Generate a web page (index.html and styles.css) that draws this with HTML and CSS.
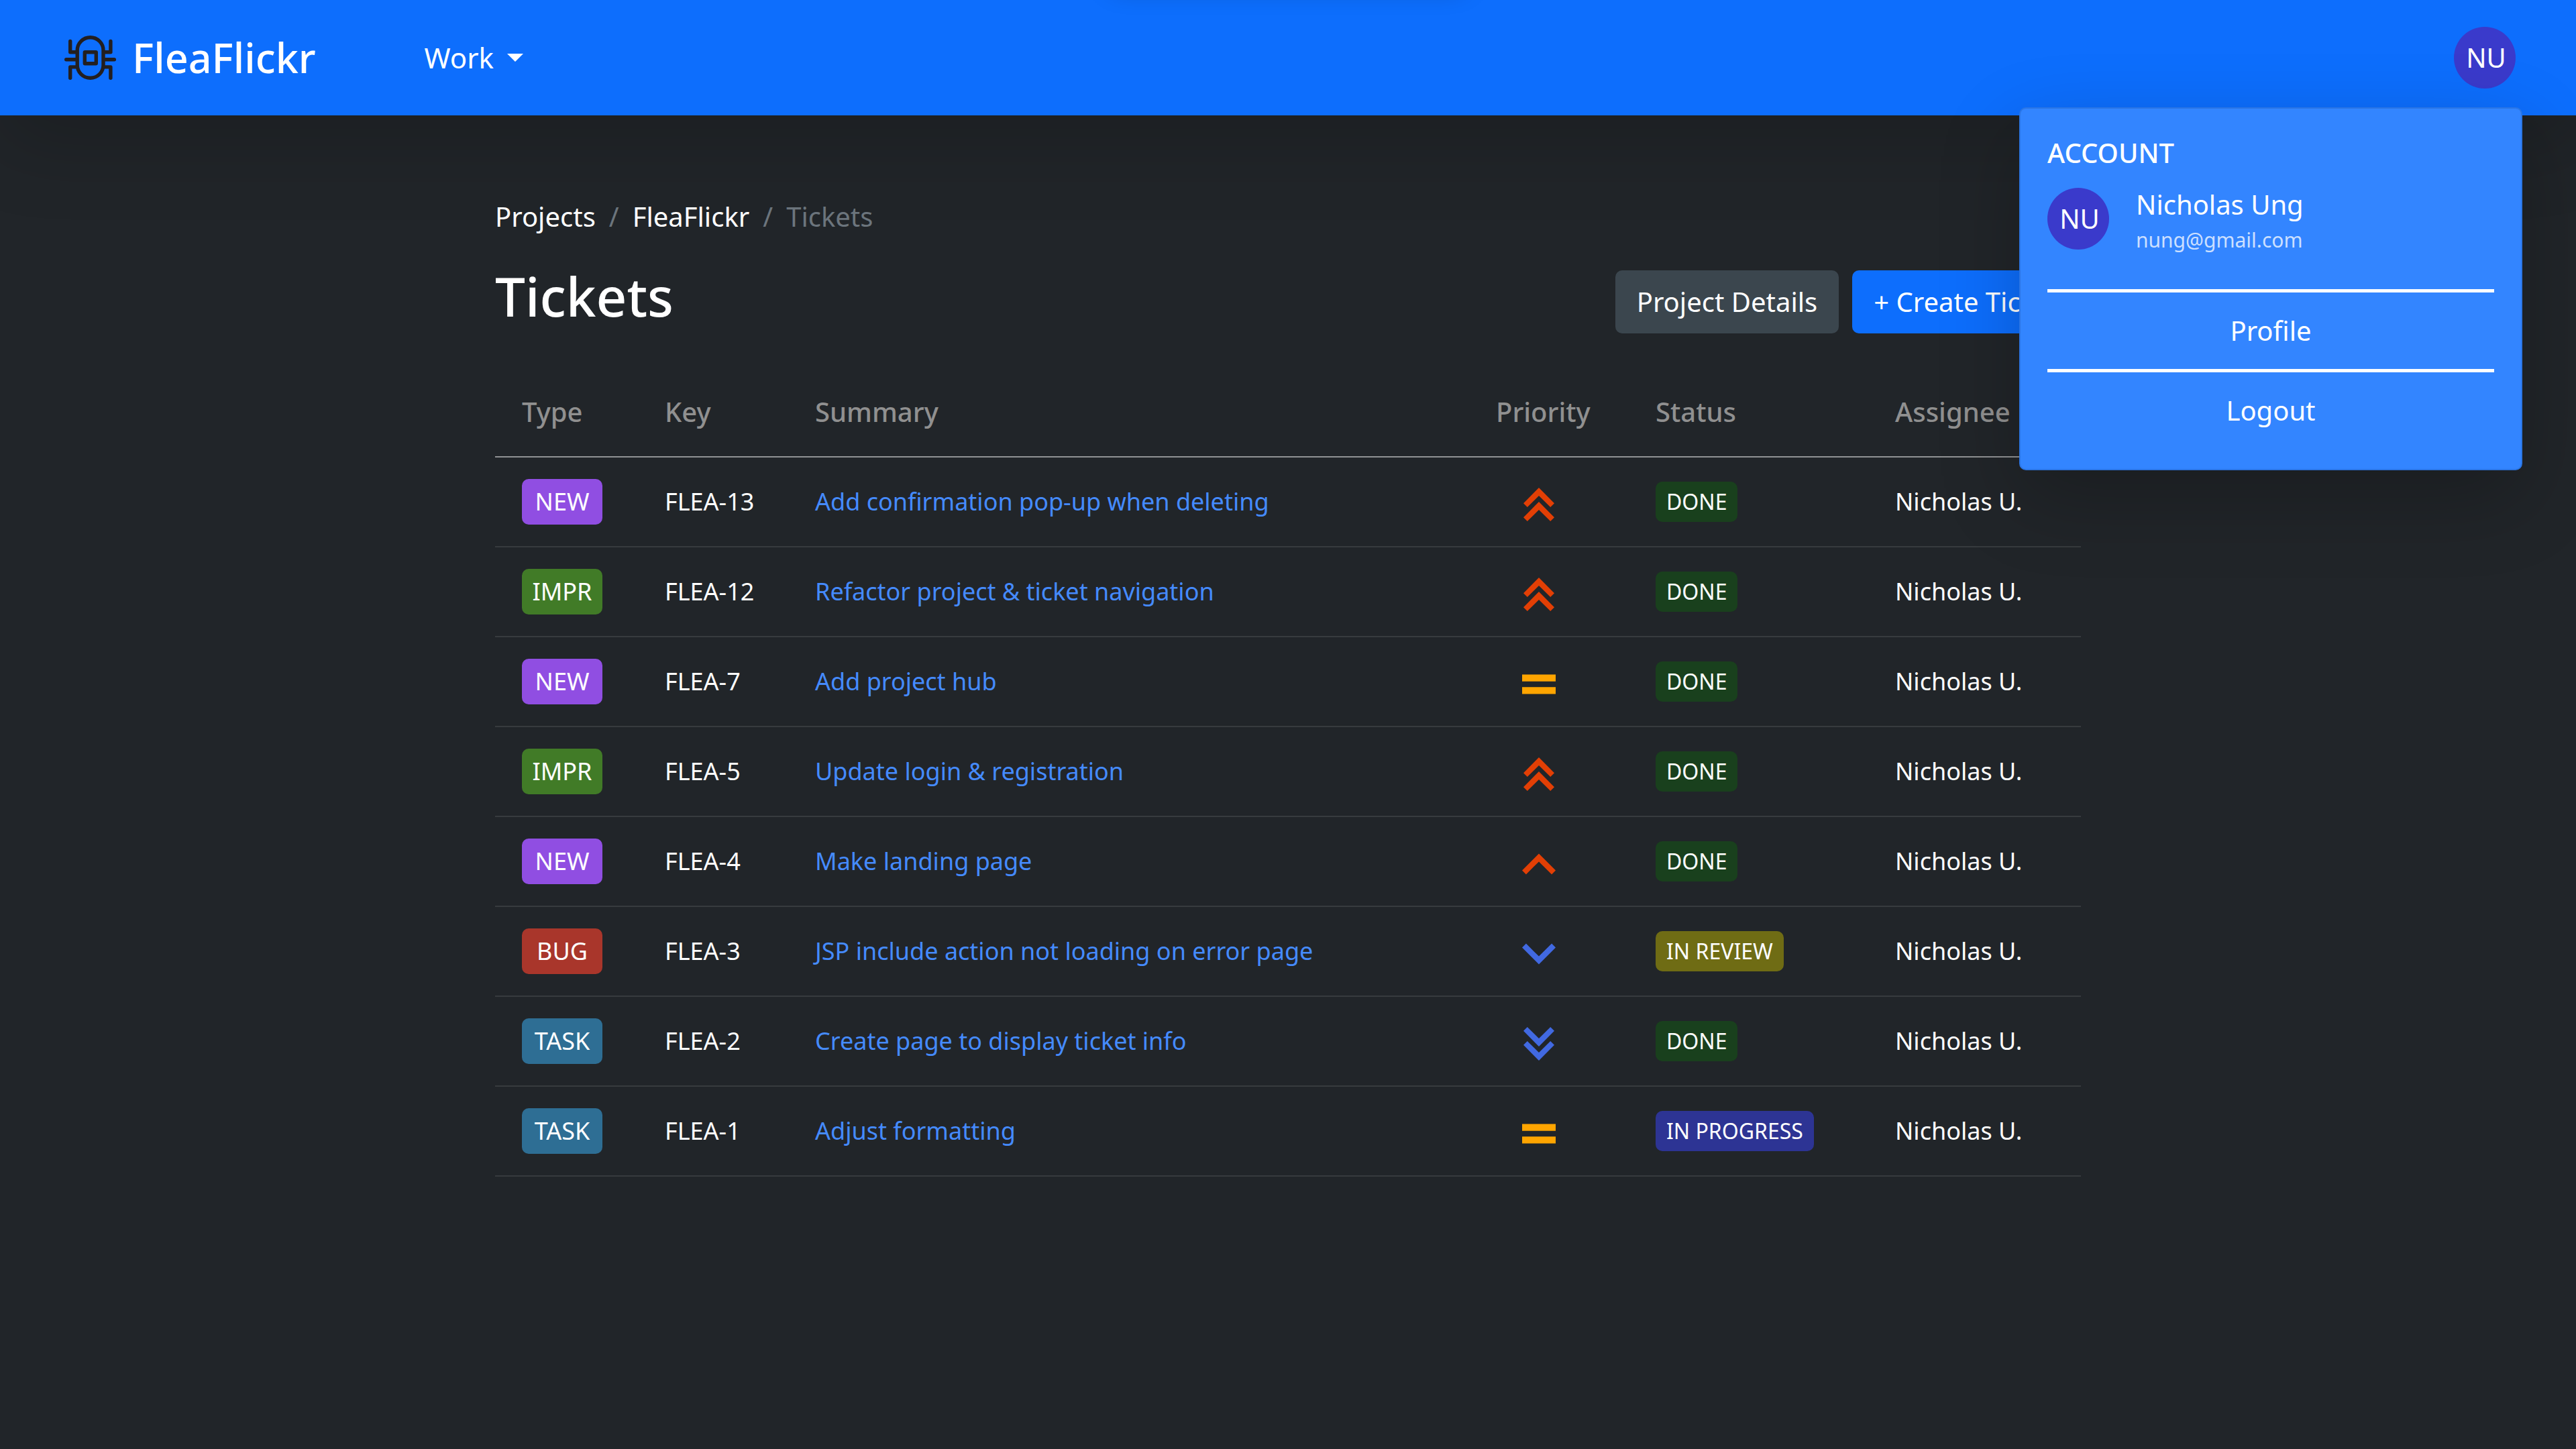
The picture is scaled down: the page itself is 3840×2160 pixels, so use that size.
FILE: index.html
```html
<!DOCTYPE html>
<html lang="en">
<head>
<meta charset="utf-8">
<meta name="viewport" content="width=device-width, initial-scale=1">
<title>Tickets - FleaFlickr</title>
<link rel="stylesheet" href="styles.css">
</head>
<body>
<svg class="sprite" width="0" height="0" aria-hidden="true">
  <symbol id="highest" viewBox="0 0 50 50"><path fill="#e23f05" d="M25 0 48 23.3 42.2 29 25 12 7.8 29 2 23.3zM25 21 48 44.3 42.2 50 25 33 7.8 50 2 44.3z"/></symbol>
  <symbol id="high" viewBox="0 0 50 50"><path fill="#e23f05" d="M25 9.6 50 34.6 44.1 40.4 25 21.4 5.9 40.4 0 34.6z"/></symbol>
  <symbol id="medium" viewBox="0 0 50 50"><path fill="#ffa500" d="M0 10.5H50V20.7H0zM0 29.3H50V39.5H0z"/></symbol>
  <symbol id="low" viewBox="0 0 50 50"><path fill="#4169e1" d="M25 40.4 0 15.4 5.9 9.6 25 28.6 44.1 9.6 50 15.4z"/></symbol>
  <symbol id="lowest" viewBox="0 0 50 50"><path fill="#4169e1" d="M25 50 2 26.7 7.8 21 25 38 42.2 21 48 26.7zM25 29 2 5.7 7.8 0 25 17 42.2 0 48 5.7z"/></symbol>
</svg>

<header class="navbar">
  <a class="brand" href="#">
    <svg class="logo" viewBox="0 0 77 66" fill="none" stroke="#231f20" stroke-width="5.4" stroke-linecap="round" stroke-linejoin="round" aria-hidden="true">
      <rect x="19.2" y="2.7" width="38.8" height="60.6" rx="19.4"/>
      <rect x="30.3" y="24.7" width="17" height="17" rx="0.5"/>
      <path d="M2.7 35.7H17M60 35.7H74.4M8.7 8.5V24.7H18M68.9 8.5V24.7H59.5M8.7 63.3V46.9H18M68.9 63.3V46.9H59.5"/>
    </svg>
    FleaFlickr
  </a>
  <nav class="main-menu">
    <button class="menu-toggle" type="button">Work</button>
  </nav>
  <div class="account">
    <button class="account-toggle" type="button" aria-expanded="true"><span class="avatar">NU</span></button>
    <div class="account-menu">
      <h2 class="account-title">ACCOUNT</h2>
      <div class="account-user">
        <span class="avatar">NU</span>
        <div>
          <div class="user-name">Nicholas Ung</div>
          <div class="user-email">nung@gmail.com</div>
        </div>
      </div>
      <a class="account-item" href="#">Profile</a>
      <a class="account-item" href="#">Logout</a>
    </div>
  </div>
</header>

<main class="container">
  <nav aria-label="Breadcrumb">
    <ol class="breadcrumb">
      <li><a href="#">Projects</a></li>
      <li><a href="#">FleaFlickr</a></li>
      <li>Tickets</li>
    </ol>
  </nav>
  <div class="title-row">
    <h1>Tickets</h1>
    <div class="actions">
      <button class="btn btn-dark" type="button">Project Details</button>
      <button class="btn btn-primary" type="button">+ Create Ticket</button>
    </div>
  </div>

  <table class="tickets">
    <colgroup>
      <col class="col-type"><col class="col-key"><col><col class="col-priority"><col class="col-status"><col class="col-assignee">
    </colgroup>
    <thead>
      <tr><th>Type</th><th>Key</th><th>Summary</th><th>Priority</th><th>Status</th><th>Assignee</th></tr>
    </thead>
    <tbody>
      <tr>
        <td><span class="type new">NEW</span></td><td>FLEA-13</td>
        <td><a href="#">Add confirmation pop-up when deleting</a></td>
        <td><svg class="priority" role="img" aria-label="Highest"><use href="#highest"/></svg></td>
        <td><span class="status done">DONE</span></td><td>Nicholas U.</td>
      </tr>
      <tr>
        <td><span class="type impr">IMPR</span></td><td>FLEA-12</td>
        <td><a href="#">Refactor project &amp; ticket navigation</a></td>
        <td><svg class="priority" role="img" aria-label="Highest"><use href="#highest"/></svg></td>
        <td><span class="status done">DONE</span></td><td>Nicholas U.</td>
      </tr>
      <tr>
        <td><span class="type new">NEW</span></td><td>FLEA-7</td>
        <td><a href="#">Add project hub</a></td>
        <td><svg class="priority" role="img" aria-label="Medium"><use href="#medium"/></svg></td>
        <td><span class="status done">DONE</span></td><td>Nicholas U.</td>
      </tr>
      <tr>
        <td><span class="type impr">IMPR</span></td><td>FLEA-5</td>
        <td><a href="#">Update login &amp; registration</a></td>
        <td><svg class="priority" role="img" aria-label="Highest"><use href="#highest"/></svg></td>
        <td><span class="status done">DONE</span></td><td>Nicholas U.</td>
      </tr>
      <tr>
        <td><span class="type new">NEW</span></td><td>FLEA-4</td>
        <td><a href="#">Make landing page</a></td>
        <td><svg class="priority" role="img" aria-label="High"><use href="#high"/></svg></td>
        <td><span class="status done">DONE</span></td><td>Nicholas U.</td>
      </tr>
      <tr>
        <td><span class="type bug">BUG</span></td><td>FLEA-3</td>
        <td><a href="#">JSP include action not loading on error page</a></td>
        <td><svg class="priority" role="img" aria-label="Low"><use href="#low"/></svg></td>
        <td><span class="status review">IN REVIEW</span></td><td>Nicholas U.</td>
      </tr>
      <tr>
        <td><span class="type task">TASK</span></td><td>FLEA-2</td>
        <td><a href="#">Create page to display ticket info</a></td>
        <td><svg class="priority" role="img" aria-label="Lowest"><use href="#lowest"/></svg></td>
        <td><span class="status done">DONE</span></td><td>Nicholas U.</td>
      </tr>
      <tr>
        <td><span class="type task">TASK</span></td><td>FLEA-1</td>
        <td><a href="#">Adjust formatting</a></td>
        <td><svg class="priority" role="img" aria-label="Medium"><use href="#medium"/></svg></td>
        <td><span class="status progress">IN PROGRESS</span></td><td>Nicholas U.</td>
      </tr>
    </tbody>
  </table>
</main>
</body>
</html>
```

FILE: styles.css
```css
*,
*::before,
*::after {
  box-sizing: border-box;
}

body {
  margin: 0;
  background: #212529;
  color: #fff;
  font-family: "Noto Sans", "Liberation Sans", sans-serif;
  font-size: 40px;
  line-height: 60px;
}

a {
  color: inherit;
  text-decoration: none;
}

button {
  margin: 0;
  border: 0;
  background: none;
  color: inherit;
  font: inherit;
  cursor: pointer;
}

h1,
h2 {
  margin: 0;
  font-weight: 500;
}

.sprite {
  position: absolute;
}

/* Navigation bar */
.navbar {
  position: relative;
  display: flex;
  align-items: center;
  padding: 30px 80px 30px 96px;
  background: #0d6efd;
  box-shadow: 0 40px 120px rgba(0, 0, 0, 0.175);
}

.navbar::before {
  content: "";
  position: absolute;
  top: -100px;
  left: 50%;
  width: 520px;
  height: 60px;
  margin-left: -260px;
  box-shadow: 0 20px 40px rgba(0, 0, 0, 0.3);
}

.brand {
  display: flex;
  align-items: center;
  gap: 24px;
  font-size: 61px;
  font-weight: 500;
}

.logo {
  width: 77px;
  height: 66px;
}

.main-menu {
  margin-left: 162px;
}

.menu-toggle {
  display: flex;
  align-items: center;
  gap: 20px;
  padding: 0;
  font-size: 42px;
}

.menu-toggle::after {
  content: "";
  border: 12px solid transparent;
  border-top-color: #fff;
  border-bottom: 0;
}

.account {
  position: relative;
  margin-left: auto;
}

.account-toggle {
  display: block;
  padding: 10px;
}

.avatar {
  display: flex;
  flex: none;
  align-items: center;
  justify-content: center;
  width: 92px;
  height: 92px;
  padding-left: 4px;
  border-radius: 50%;
  background: #3a3acb;
}

.account-menu {
  position: absolute;
  top: calc(100% + 18px);
  right: 0;
  z-index: 10;
  width: 750px;
  padding: 42px 40px 30px;
  border: 2px solid #2b76e5;
  border-radius: 10px;
  background: #3385ff;
  box-shadow: 0 40px 120px rgba(0, 0, 0, 0.22);
}

.account-title {
  font-size: 40px;
  line-height: 48px;
}

.account-user {
  display: flex;
  align-items: flex-start;
  gap: 40px;
  margin: 28px 0 45px;
}

.user-name {
  line-height: 50px;
}

.user-email {
  color: rgba(255, 255, 255, 0.75);
  font-size: 30px;
  line-height: 56px;
}

.account-item {
  display: block;
  padding: 27px 0;
  border-top: 5px solid #fff;
  text-align: center;
}

/* Page */
.container {
  max-width: 2364px;
  margin: 0 auto;
  padding: 121px 0;
}

.breadcrumb {
  display: flex;
  margin: 0 0 40px;
  padding: 0;
  list-style: none;
}

.breadcrumb li + li::before {
  content: "/";
  padding: 0 20px;
}

.breadcrumb li {
  color: #6c757d;
}

.breadcrumb a {
  color: #fff;
}

.title-row {
  display: flex;
  align-items: flex-start;
  justify-content: space-between;
}

h1 {
  font-size: 80px;
  line-height: 96px;
}

.actions {
  display: flex;
  gap: 20px;
  padding-top: 10px;
}

.btn {
  padding: 17px 32px;
  border-radius: 10px;
}

.btn-dark {
  background: #3b464e;
}

.btn-primary {
  background: #0d6efd;
}

/* Ticket table */
.tickets {
  width: 100%;
  margin-top: 51px;
  border-spacing: 0;
  table-layout: fixed;
  font-size: 36px;
}

.col-type {
  width: 213px;
}

.col-key {
  width: 224px;
}

.col-priority {
  width: 238px;
}

.col-status {
  width: 357px;
}

.col-assignee {
  width: 317px;
}

.tickets th {
  padding: 36px 40px;
  border-bottom: 2px solid #909294;
  color: #909090;
  font-size: 40px;
  font-weight: 500;
  text-align: left;
}

.tickets td {
  height: 134px;
  padding: 32px 40px;
  border-bottom: 2px solid #373b3e;
  vertical-align: middle;
  white-space: nowrap;
}

.tickets a {
  color: #458bff;
}

.type,
.status {
  display: block;
  border-radius: 10px;
}

.type {
  width: 120px;
  line-height: 68px;
  text-align: center;
}

.status {
  width: fit-content;
  padding: 0 16px;
  font-size: 32px;
}

.priority {
  display: block;
  width: 50px;
  height: 50px;
  margin: 8px 0 0 39px;
}

.new {
  background: #904ee2;
}

.impr {
  background: #417b27;
}

.bug {
  background: #a9362b;
}

.task {
  background: #2e6e94;
}

.done {
  background: #19401d;
}

.review {
  background: #6f6c14;
}

.progress {
  background: #2d3494;
}
```
